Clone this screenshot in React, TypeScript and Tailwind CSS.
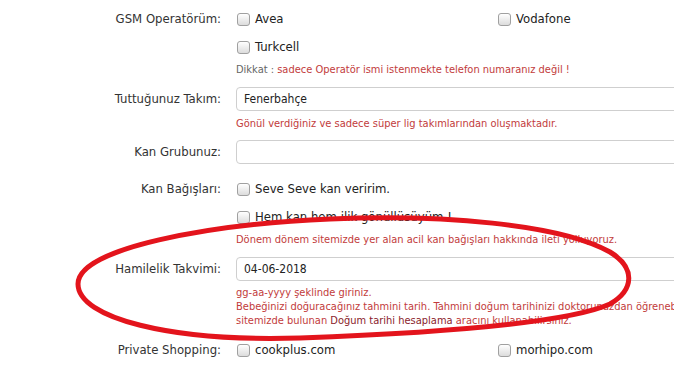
import React from 'react';

const font = { fontFamily: '"DejaVu Sans Condensed", "DejaVu Sans", sans-serif' };

function Check({ label, wide }: { label: string; wide?: boolean }) {
  return (
    <div className={`flex items-center gap-[5px] ${wide ? 'w-[261px]' : ''}`}>
      <span className="ml-[1px] inline-block h-[13px] w-[13px] rounded-[3px] border border-[#a0a0a0] bg-gradient-to-b from-white to-[#dcdcdc]" />
      <span className="text-[13px] text-[#222]">{label}</span>
    </div>
  );
}

function Label({ text, h }: { text: string; h: string }) {
  return (
    <div className={`flex w-[221px] shrink-0 items-center justify-end text-[13px] text-[#333] ${h}`}>
      {text}
    </div>
  );
}

function Input({ value }: { value?: string }) {
  return (
    <div className="flex h-[24px] w-[540px] shrink-0 items-center rounded-[4px] border border-[#cfcfcf] bg-white px-[7px] text-[12px] text-[#222]">
      {value}
    </div>
  );
}

export default function App() {
  return (
    <div className="relative h-[367px] w-[674px] overflow-hidden bg-white pt-[5px]" style={font}>
      {/* GSM */}
      <div className="flex gap-[15px]">
        <Label text="GSM Operatörüm:" h="h-[28px]" />
        <div className="flex flex-col">
          <div className="flex h-[28px] items-center">
            <Check label="Avea" wide />
            <Check label="Vodafone" />
          </div>
          <div className="flex h-[28px] items-center">
            <Check label="Turkcell" />
          </div>
          <div className="flex h-[18px] items-center whitespace-nowrap text-[11px]">
            <span className="text-[#666]">Dikkat :&nbsp;</span>
            <span className="text-[#c23b3b]">sadece Operatör ismi istenmekte telefon numaranız değil !</span>
          </div>
        </div>
      </div>

      {/* Takim */}
      <div className="mt-[8px] flex gap-[15px]">
        <Label text="Tuttuğunuz Takım:" h="h-[24px]" />
        <div className="flex flex-col">
          <Input value="Fenerbahçe" />
          <div className="mt-[4px] flex h-[18px] items-center whitespace-nowrap text-[11px] text-[#c23b3b]">
            Gönül verdiğiniz ve sadece süper lig takımlarından oluşmaktadır.
          </div>
        </div>
      </div>

      {/* Kan grubu */}
      <div className="mt-[7px] flex gap-[15px]">
        <Label text="Kan Grubunuz:" h="h-[24px]" />
        <Input />
      </div>

      {/* Kan bagislari */}
      <div className="mt-[11px] flex gap-[15px]">
        <Label text="Kan Bağışları:" h="h-[28px]" />
        <div className="flex flex-col">
          <div className="flex h-[28px] items-center">
            <Check label="Seve Seve kan veririm." />
          </div>
          <div className="flex h-[28px] items-center">
            <Check label="Hem kan hem ilik gönüllüsüyüm !" />
          </div>
          <div className="flex h-[18px] items-center whitespace-nowrap text-[11px] text-[#c23b3b]">
            Dönem dönem sitemizde yer alan acil kan bağışları hakkında ileti yolluyoruz.
          </div>
        </div>
      </div>

      {/* Hamilelik */}
      <div className="mt-[8px] flex gap-[15px]">
        <Label text="Hamilelik Takvimi:" h="h-[24px]" />
        <div className="flex flex-col">
          <Input value="04-06-2018" />
          <div className="mt-[5px] w-[430px] whitespace-nowrap text-[11px] leading-[14px] text-[#c23b3b]">
            <div>gg-aa-yyyy şeklinde giriniz.</div>
            <div>Bebeğinizi doğuracağınız tahmini tarih. Tahmini doğum tarihinizi doktorunuzdan öğrenebilirsiniz</div>
            <div>
              sitemizde bulunan <span className="text-[#8a1c2b]">Doğum tarihi hesaplama</span> aracını kullanabilirsiniz.
            </div>
          </div>
        </div>
      </div>

      {/* Private shopping */}
      <div className="mt-[8px] flex gap-[15px]">
        <Label text="Private Shopping:" h="h-[28px]" />
        <div className="flex h-[28px] items-center">
          <Check label="cookplus.com" wide />
          <Check label="morhipo.com" />
        </div>
      </div>

      {/* hand-drawn red ellipse */}
      <svg className="pointer-events-none absolute left-0 top-0" width="674" height="367" viewBox="0 0 674 367">
        <path
          d="M 300 338 C 170 342, 78 318, 78 284 C 78 248, 210 224, 330 219 C 440 214, 560 224, 610 252 C 636 268, 634 290, 610 304 C 570 322, 460 332, 300 338 Z"
          fill="none"
          stroke="#e3141c"
          strokeWidth="5"
          strokeLinecap="round"
        />
      </svg>
    </div>
  );
}
